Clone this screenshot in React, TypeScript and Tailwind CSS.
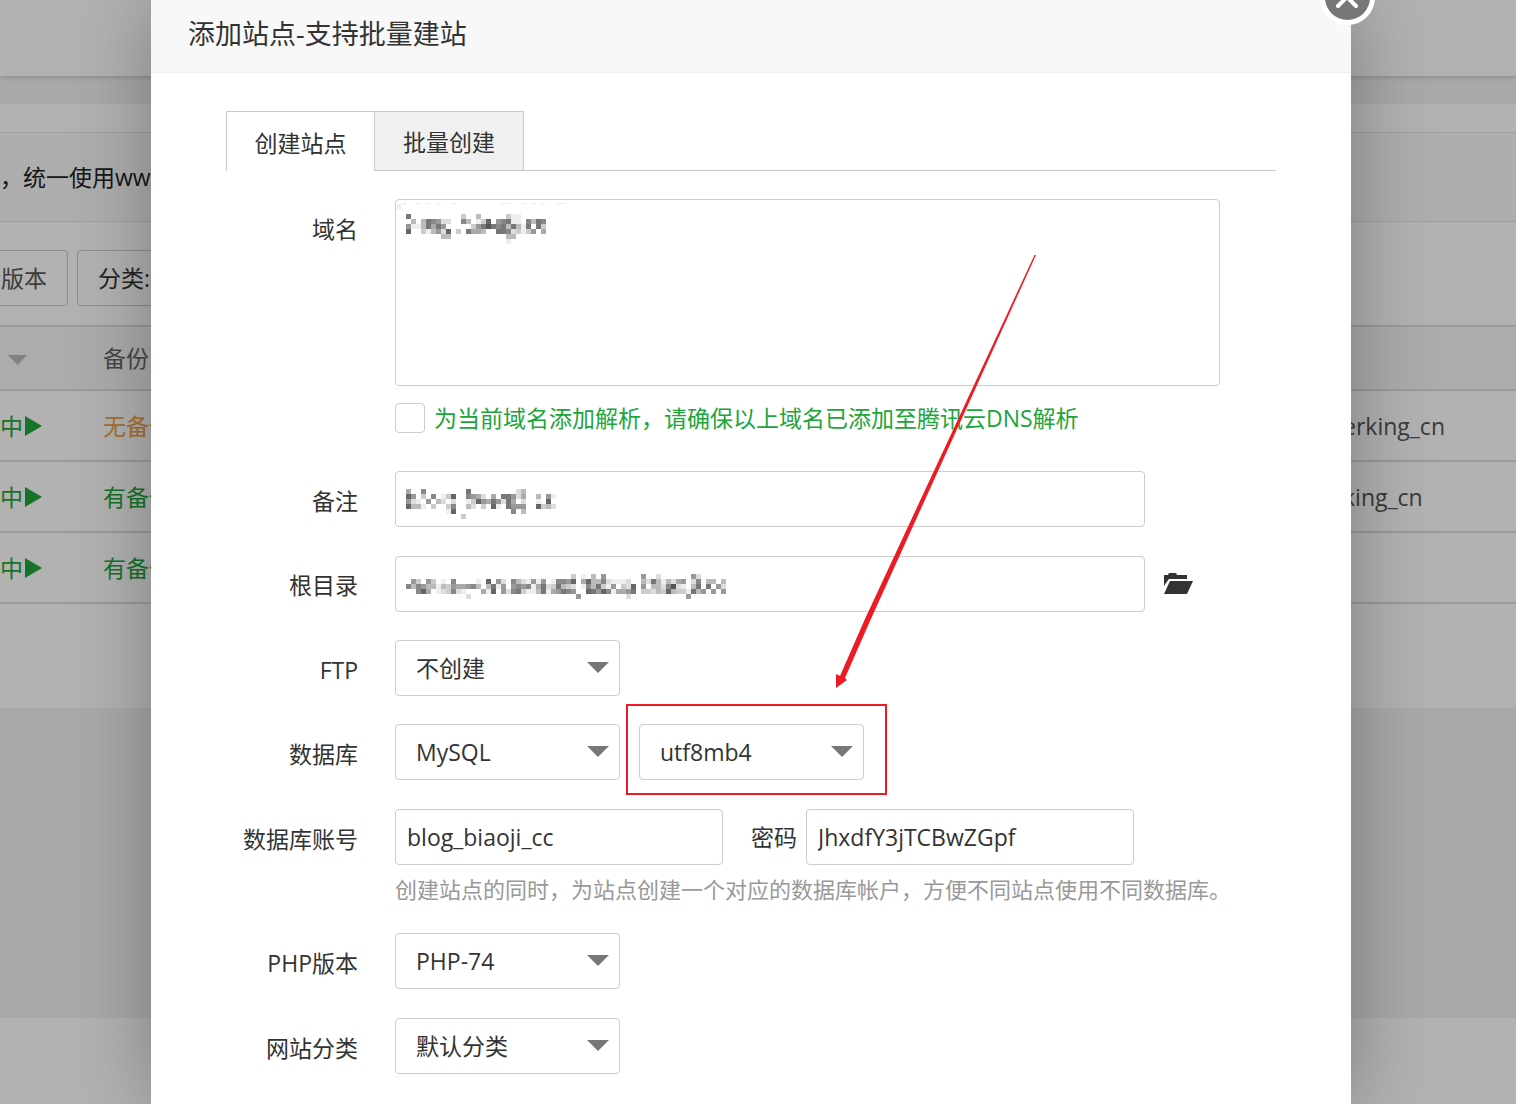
import { useState } from "react";

const DOMAIN_MOSAIC = [
    "7..ff......c..b.....cee.....",
    ".b.b789dd..8b.ec6.987ee.8b78",
    "9eeb7a79.....c975787b7be7.7c",
    "6ffceb9d6fc.7aabf.778dcec9.a",
    ".f.....bbf..........bb......",
    "....................e.......",
];

const REMARK_MOSAIC = [
    "a..8........7..f......db......",
    "69.c.8.ec6..89ad.a.779da..b.9e",
    "9def9.bdfd..ec69a79d7a.d.fe.6.",
    "6bbe.c..c8..bd.c.6e.7999..6cbd",
    ".......fe6...........8.b.f....",
    "........f..c.............f....",
];

const ROOT_MOSAIC = [
    ".................................c.efb.9.......9..d......9d.....",
    ".9cf9c.e.8f.f.e.6.9d.8bde9e9.e8896.a6bb8deeedf.bd7bebda9.d8.bb.b",
    "8b89bbebc9aa98b.b7e9.9898ea7dc7bcd.e8b7ce9fcd6.9.bbd85de.b7.7.9d",
    "..86a.edc8de...ae6.9d87ceeb7ea9789..67968eaa97.ccdbc6bcce7b9.9.9",
    "............d.....................9.........df..........9.......",
];

const BACKUPS = [
    { text: "无备份", color: "text-[#f0a040]", account: "erking_cn" },
    { text: "有备份", color: "text-[#20a53a]", account: "king_cn" },
    { text: "有备份", color: "text-[#20a53a]", account: "" },
];

const Mosaic = ({ rows, className }: { rows: string[]; className: string }) => (
    <svg
        className={`pointer-events-none absolute ${className}`}
        width={rows[0].length * 5}
        height={rows.length * 5}
        shapeRendering="crispEdges"
        aria-hidden="true"
    >
        {rows.map((row, y) =>
            row.split("").map((c, x) =>
                c === "." ? null : <rect key={`${x}-${y}`} x={x * 5} y={y * 5} width="5" height="5" fill={`#${c}${c}${c}`} />
            )
        )}
    </svg>
);

const inputClass = "block h-14 rounded border border-[#ccc] bg-white px-[11px] text-[#333] outline-none";

const Row = ({ label, id, children }: { label: string; id: string; children: React.ReactNode }) => (
    <div className="flex items-start gap-[37px]">
        <label htmlFor={id} className="flex h-14 w-[132px] shrink-0 items-center justify-end pt-1 whitespace-nowrap">
            {label}
        </label>
        <div className="min-w-0 flex-1">{children}</div>
    </div>
);

const Select = ({ id, label, options }: { id: string; label?: string; options: string[] }) => (
    <div className="relative w-[225px]">
        <select id={id} aria-label={label} className="block h-14 w-full appearance-none rounded border border-[#ccc] bg-white px-5 text-[#333] outline-none">
            {options.map((o) => (
                <option key={o}>{o}</option>
            ))}
        </select>
        <svg className="pointer-events-none absolute top-[22px] right-[11px]" width="22" height="11" aria-hidden="true">
            <path d="M0 0H22L11 11Z" fill="#777" />
        </svg>
    </div>
);

const SitePage = () => (
    <div className="min-h-screen bg-[#f2f2f2] text-[#333]">
        <div className="relative h-[76px] bg-white shadow-[0_1px_5px_rgba(0,0,0,0.2)]" />
        <div className="mt-7 h-[604px] bg-white pt-7">
            <p className="flex h-[90px] items-center overflow-hidden border-y border-[#e4e4e4] bg-[#fafafa] whitespace-nowrap text-[#222]">
                ，统一使用www.
            </p>
            <div className="flex h-[103px] items-center gap-[9px] pt-2">
                <button type="button" className="-ml-[43px] h-14 rounded border border-[#ccc] px-5 whitespace-nowrap text-[#555]">
                    行版本
                </button>
                <button type="button" className="h-14 rounded border border-[#ccc] px-5 whitespace-nowrap">
                    分类:
                </button>
            </div>
            <table className="w-full table-fixed border-collapse text-left">
                <thead>
                    <tr className="h-16 border-y-2 border-[#ddd] bg-[#f6f6f6] text-[#666]">
                        <th className="w-[103px] pt-1 pl-2">
                            <svg width="19" height="10" aria-label="排序">
                                <path d="M0 0H19L9.500 10Z" fill="#bbb" />
                            </svg>
                        </th>
                        <th className="font-normal">备份</th>
                        <th className="w-[173px]" />
                    </tr>
                </thead>
                <tbody>
                    {BACKUPS.map((b, i) => (
                        <tr key={i} className="h-[71px] border-b-2 border-[#ddd]">
                            <td className="text-[#20a53a]">
                                <span className="flex items-center gap-[2px]">
                                    中
                                    <svg width="17" height="20" aria-hidden="true">
                                        <path d="M0 0L17 10L0 20Z" fill="currentColor" />
                                    </svg>
                                </span>
                            </td>
                            <td className={b.color}>{b.text}</td>
                            <td className="text-[#555]">{b.account}</td>
                        </tr>
                    ))}
                </tbody>
            </table>
        </div>
        <footer className="mt-[310px] h-[86px] bg-white" />
    </div>
);

const AddSiteDialog = () => {
    const [tab, setTab] = useState(0);
    return (
        <div role="dialog" aria-labelledby="dialog-title" className="relative min-h-screen w-full max-w-[1200px] bg-white shadow-[1px_1px_75px_rgba(0,0,0,0.3)]">
            <button type="button" aria-label="关闭" className="absolute -top-[30px] -right-6 h-[55px] w-[55px]">
                <svg width="55" height="55" viewBox="0 0 55 55">
                    <circle cx="27.500" cy="27.500" r="27.500" fill="#fff" />
                    <circle cx="27.500" cy="27.500" r="22.500" fill="#777" />
                    <path d="M18 18L36 36M36 18L18 36" stroke="#fff" strokeWidth="4" strokeLinecap="round" />
                </svg>
            </button>
            <h1 id="dialog-title" className="flex h-[73px] items-center border-b border-[#eee] bg-[#f8f8f8] px-[37px] pb-1 text-[27px]">
                添加站点-支持批量建站
            </h1>
            <form className="px-[75px] pt-[38px] pb-[30px]">
                <div className="flex border-b border-[#c8c8d8]">
                    {["创建站点", "批量创建"].map((name, i) => (
                        <button
                            key={name}
                            type="button"
                            onClick={() => setTab(i)}
                            className={`-mb-px h-[60px] border-[#c8c8d8] pt-[2px] ${i === 0 ? "w-[148px] border-t border-l" : "w-[150px] border"} ${tab === i ? "border-b-0 bg-white" : "bg-[#f0f0f0]"}`}
                        >
                            {name}
                        </button>
                    ))}
                </div>
                <div className="flex flex-col gap-7 pt-7">
                    <Row label="域名" id="domain">
                        <div className="relative w-[825px]">
                            <textarea id="domain" className="block h-[187px] w-full resize-none rounded border border-[#ccc] bg-white p-[11px] outline-none" />
                            <Mosaic rows={DOMAIN_MOSAIC} className="top-[15px] left-[11px]" />
                            <svg className="pointer-events-none absolute top-1 left-[2px]" width="170" height="6" shapeRendering="crispEdges" aria-hidden="true">
                                <path d="M0 1h4v5h-4zM4 0h5v1h-5zM19 0h5v1h-5zM29 0h5v1h-5zM39 0h5v1h-5zM54 0h5v1h-5zM104 0h10v1h-10zM124 0h5v1h-5zM134 0h5v1h-5zM144 0h5v1h-5zM159 0h10v1h-10z" fill="#eee" />
                            </svg>
                        </div>
                        <div className="mt-[17px] mb-[10px] flex h-[30px] items-center gap-[9px]">
                            <input id="dns" type="checkbox" className="h-[30px] w-[30px] shrink-0 appearance-none rounded border border-[#ccc] bg-white" />
                            <label htmlFor="dns" className="whitespace-nowrap text-[#20a53a]">
                                为当前域名添加解析，请确保以上域名已添加至腾讯云DNS解析
                            </label>
                        </div>
                    </Row>
                    <Row label="备注" id="remark">
                        <div className="relative w-[750px]">
                            <input id="remark" type="text" className={`${inputClass} w-full`} />
                            <Mosaic rows={REMARK_MOSAIC} className="top-[18px] left-[11px]" />
                        </div>
                    </Row>
                    <Row label="根目录" id="root-dir">
                        <div className="flex h-[57px] items-center gap-[18px]">
                            <div className="relative w-[750px]">
                                <input id="root-dir" type="text" className={`${inputClass} w-full`} />
                                <Mosaic rows={ROOT_MOSAIC} className="top-[18px] left-[11px]" />
                            </div>
                            <button type="button" aria-label="选择目录">
                                <svg width="30" height="22" viewBox="0 0 30 22" fill="#333">
                                    <path d="M1 13V2H5L6 0H13L14 2H24V6H6L3 10Z" />
                                    <path d="M7 8H30L24 21H1Z" />
                                </svg>
                            </button>
                        </div>
                    </Row>
                    <Row label="FTP" id="ftp">
                        <Select id="ftp" options={["不创建", "创建"]} />
                    </Row>
                    <Row label="数据库" id="db">
                        <div className="flex h-[57px] gap-[19px]">
                            <Select id="db" options={["MySQL", "不创建"]} />
                            <div className="relative">
                                <Select id="charset" label="字符集" options={["utf8mb4", "utf8", "gbk", "big5"]} />
                                <div className="pointer-events-none absolute -top-5 -left-[13px] h-[91px] w-[261px] border-2 border-[#ed1c24]" />
                            </div>
                        </div>
                    </Row>
                    <Row label="数据库账号" id="db-user">
                        <div className="flex items-center">
                            <input id="db-user" type="text" defaultValue="blog_biaoji_cc" className={`${inputClass} w-[328px]`} />
                            <label htmlFor="db-pass" className="mr-[10px] ml-7 w-[45px] whitespace-nowrap">
                                密码
                            </label>
                            <input id="db-pass" type="text" defaultValue="JhxdfY3jTCBwZGpf" className={`${inputClass} w-[328px]`} />
                        </div>
                        <p className="mt-2 text-[22px] leading-8 whitespace-nowrap text-[#999]">
                            创建站点的同时，为站点创建一个对应的数据库帐户，方便不同站点使用不同数据库。
                        </p>
                    </Row>
                    <Row label="PHP版本" id="php">
                        <div className="h-[57px]">
                            <Select id="php" options={["PHP-74", "纯静态"]} />
                        </div>
                    </Row>
                    <Row label="网站分类" id="category">
                        <Select id="category" options={["默认分类"]} />
                    </Row>
                </div>
            </form>
            {/* arrow pointing at the charset select */}
            <svg className="pointer-events-none absolute top-[250px] left-[675px]" width="220" height="440" aria-hidden="true">
                <path d="M208.500 5L38.500 370L14 426L10 424V438L21 430L19 428L44 371L210 5Z" fill="#ed1c24" />
            </svg>
        </div>
    );
};

const App: React.FC = () => {
    return (
        <div className="relative overflow-hidden font-['Open_Sans','Noto_Sans_CJK_SC',sans-serif] text-[23px] leading-8 text-[#333]">
            <SitePage />
            <div className="absolute inset-0 flex justify-center bg-black/30 pr-[14px]">
                <AddSiteDialog />
            </div>
        </div>
    );
};

export default App;
